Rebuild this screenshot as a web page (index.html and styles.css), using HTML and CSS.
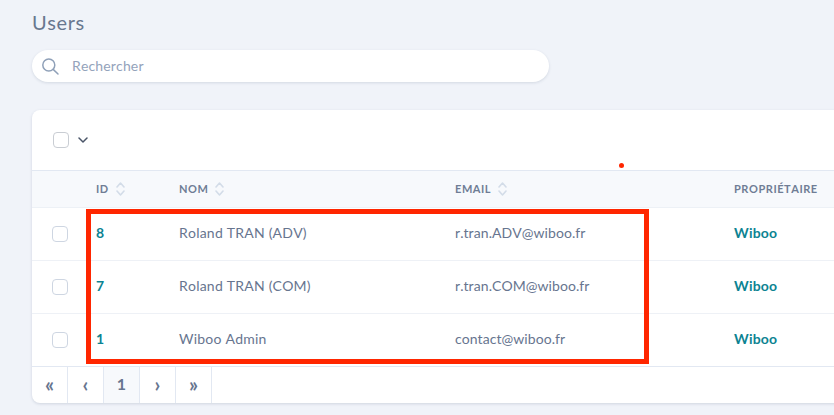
FILE: index.html
```html
<!DOCTYPE html>
<html lang="fr">
<head>
<meta charset="utf-8">
<title>Users</title>
<link rel="stylesheet" href="styles.css">
</head>
<body>
<main class="page">
  <h1 class="title">Users</h1>
  <div class="search">
    <svg class="search-icon" width="20" height="20" viewBox="0 0 20 20" fill="none" stroke="#8fa0b8" stroke-width="1.5" stroke-linecap="round"><circle cx="7.8" cy="9" r="6"/><path d="M12.2 13.4L17 18"/></svg>
    <span class="placeholder">Rechercher</span>
  </div>
  <section class="card">
    <div class="toolbar">
      <span class="box box-top"></span>
      <svg class="chev" width="10" height="6" viewBox="0 0 10 6" fill="none" stroke="#4a5568" stroke-width="1.5" stroke-linecap="round" stroke-linejoin="round"><path d="M1 1l4 4 4-4"/></svg>
    </div>
    <div class="row head">
      <span></span>
      <span class="th"><span class="th-label">ID</span> <svg class="sort" width="9" height="14" viewBox="0 0 9 14" fill="none" stroke="#d3dce8" stroke-width="1.6" stroke-linecap="round" stroke-linejoin="round"><path d="M1 5l3.5-4L8 5M1 9l3.5 4L8 9"/></svg></span>
      <span class="th"><span class="th-label">NOM</span> <svg class="sort" width="9" height="14" viewBox="0 0 9 14" fill="none" stroke="#d3dce8" stroke-width="1.6" stroke-linecap="round" stroke-linejoin="round"><path d="M1 5l3.5-4L8 5M1 9l3.5 4L8 9"/></svg></span>
      <span class="th"><span class="th-label">EMAIL</span> <svg class="sort" width="9" height="14" viewBox="0 0 9 14" fill="none" stroke="#d3dce8" stroke-width="1.6" stroke-linecap="round" stroke-linejoin="round"><path d="M1 5l3.5-4L8 5M1 9l3.5 4L8 9"/></svg></span>
      <span class="th"><span class="th-label">PROPRIÉTAIRE</span></span>
    </div>
    <div class="row body-row">
      <span class="box"></span><a class="link">8</a><span class="cell">Roland TRAN (ADV)</span><span class="cell email">r.tran.ADV@wiboo.fr</span><a class="link">Wiboo</a>
    </div>
    <div class="row body-row">
      <span class="box"></span><a class="link">7</a><span class="cell">Roland TRAN (COM)</span><span class="cell email">r.tran.COM@wiboo.fr</span><a class="link">Wiboo</a>
    </div>
    <div class="row body-row">
      <span class="box"></span><a class="link">1</a><span class="cell">Wiboo Admin</span><span class="cell email">contact@wiboo.fr</span><a class="link">Wiboo</a>
    </div>
    <nav class="pager">
      <span class="pg">«</span><span class="pg">‹</span><span class="pg current">1</span><span class="pg">›</span><span class="pg">»</span>
    </nav>
    <div class="highlight"></div>
    <div class="dot"></div>
  </section>
</main>
</body>
</html>
```
FILE: styles.css
```css
html, body {
  margin: 0;
  height: 100%;
  overflow: hidden;
}
body {
  background: #f0f3f9;
  font-family: "Lato", "Open Sans", sans-serif;
  font-kerning: none;
  color: #67758f;
}
.page {
  padding: 9px 0 0 32px;
  width: 920px;
}
.title {
  margin: 0 0 15px;
  font-size: 20px;
  line-height: 26px;
  font-weight: 400;
  color: #68778f;
  letter-spacing: 0.6px;
}
.search {
  width: 517px;
  height: 32px;
  box-sizing: border-box;
  background: #fff;
  border-radius: 16px;
  box-shadow: 0 1px 3px rgba(60, 80, 110, 0.16);
  display: flex;
  align-items: center;
  padding-left: 9px;
  margin-bottom: 28px;
}
.search-icon {
  flex: none;
}
.placeholder {
  margin-left: 11px;
  padding-bottom: 2px;
  font-size: 14px;
  color: #94a3bb;
  letter-spacing: 0.15px;
}
.card {
  position: relative;
  width: 888px;
  background: #fff;
  border-radius: 8px;
  box-shadow: 0 1px 3px rgba(60, 80, 110, 0.18);
}
.toolbar {
  height: 60px;
  display: flex;
  align-items: center;
  padding-left: 21px;
  gap: 9px;
  border-bottom: 1px solid #e2e8f2;
}
.box {
  width: 14px;
  height: 14px;
  border: 1px solid #ced6e2;
  border-radius: 4px;
  background: #fff;
  display: block;
  margin-left: 20px;
}
.box-top {
  margin-left: 0;
  border-color: #c9cdd3;
}
.chev {
  display: block;
}
.row {
  display: grid;
  grid-template-columns: 64px 83px 276px 279px 1fr;
  align-items: center;
}
.head {
  height: 36px;
  background: #f7f9fc;
  border-bottom: 1px solid #edf1f6;
}
.th {
  font-size: 11px;
  font-weight: 700;
  color: #6f7d95;
  letter-spacing: 0.55px;
  display: flex;
  align-items: center;
  gap: 7px;
}
.th-label {
  padding-bottom: 2px;
}
.sort {
  display: block;
}
.body-row {
  height: 52px;
  border-bottom: 1px solid #eef1f6;
  font-size: 14px;
}
.body-row:nth-of-type(5) {
  border-bottom-color: #e2e8f2;
}
.cell {
  color: #67758f;
  letter-spacing: 0.22px;
  padding-bottom: 3px;
}
.email {
  letter-spacing: 0.06px;
}
.link {
  color: #0c8392;
  font-weight: 700;
  letter-spacing: 0.2px;
  padding-bottom: 3px;
}
.pager {
  display: flex;
  height: 36px;
  font-size: 20px;
  font-weight: 700;
  color: #67758f;
}
.pg {
  width: 35px;
  padding-bottom: 3px;
  border-right: 1px solid #e2e8f2;
  display: flex;
  align-items: center;
  justify-content: center;
}
.current {
  background: #f7f9fc;
  font-size: 16px;
}
.highlight {
  position: absolute;
  left: 54px;
  top: 99px;
  width: 553px;
  height: 145px;
  border: 5px solid #ff2600;
}
.dot {
  position: absolute;
  left: 587px;
  top: 52.5px;
  width: 5px;
  height: 5px;
  border-radius: 50%;
  background: #ff2600;
}
```
